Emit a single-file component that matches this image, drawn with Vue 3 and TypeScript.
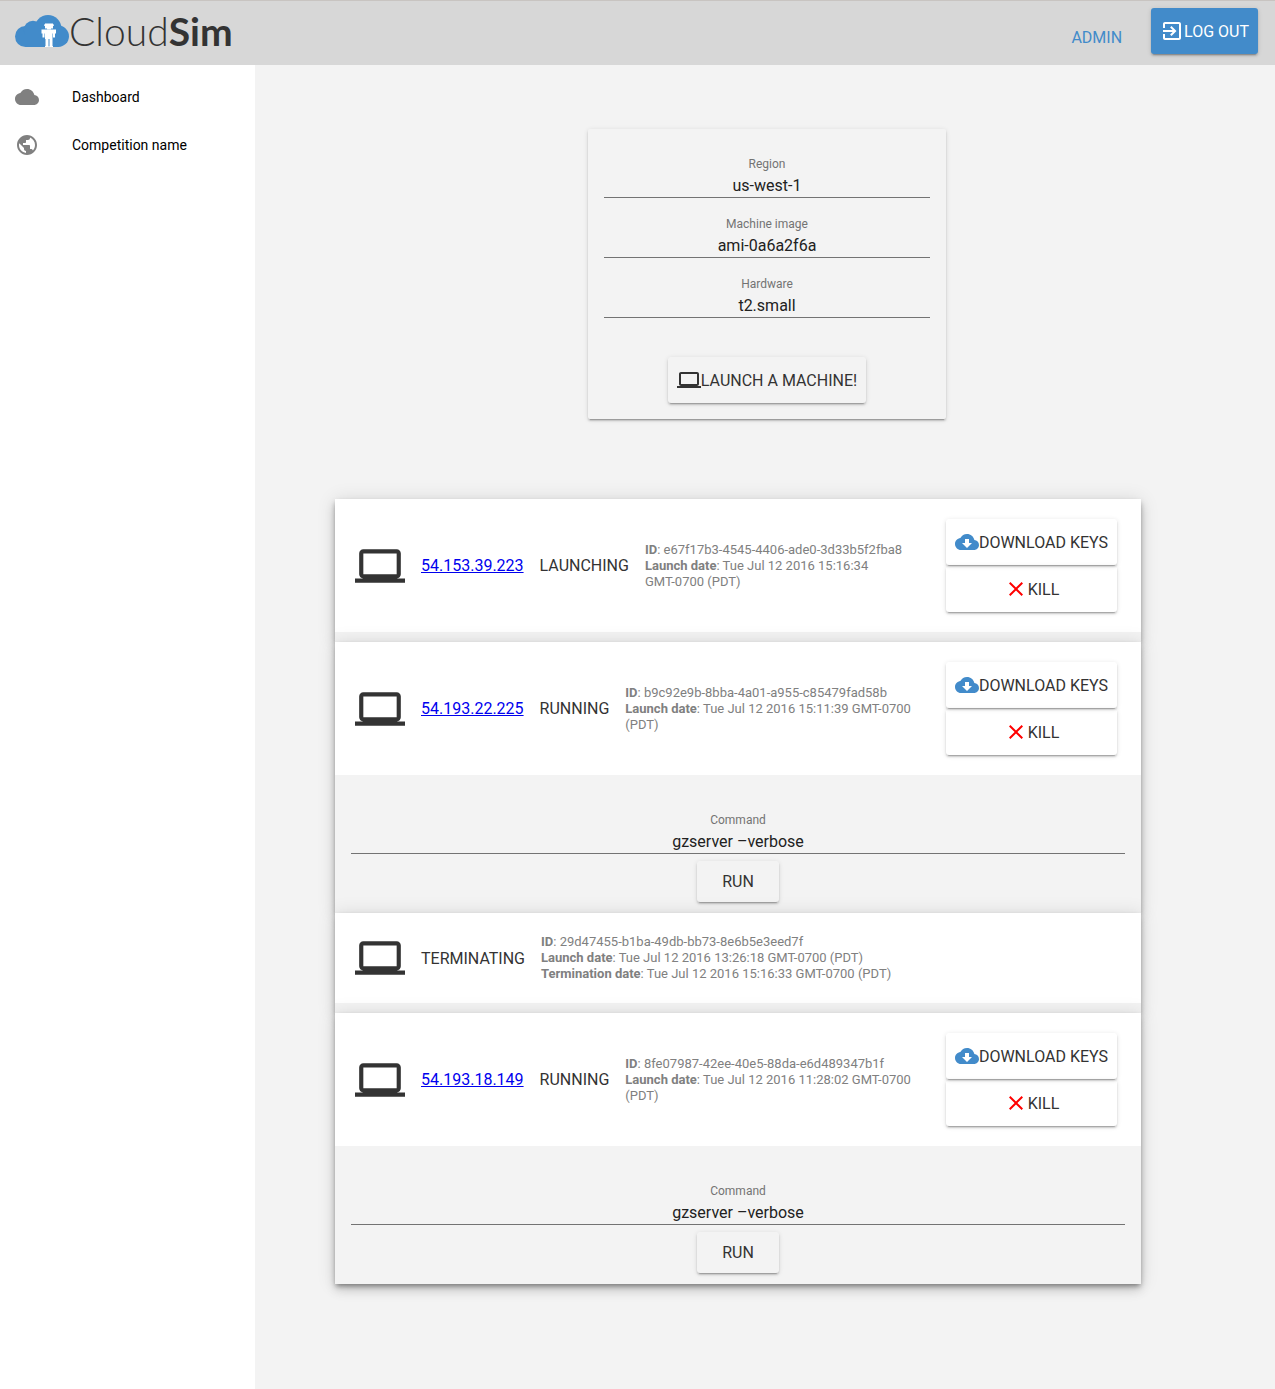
<script setup lang="ts">
import { reactive } from 'vue'

interface Machine {
  id: string
  ip?: string
  status: string
  launchDate: string
  terminationDate?: string
  command?: string
}

const icons = {
  cloud:
    'M19.35 10.04C18.67 6.59 15.64 4 12 4 9.11 4 6.6 5.64 5.35 8.04 2.34 8.36 0 10.91 0 14c0 3.31 2.69 6 6 6h13c2.76 0 5-2.24 5-5 0-2.64-2.05-4.78-4.65-4.96z',
  globe:
    'M12 2C6.48 2 2 6.48 2 12s4.48 10 10 10 10-4.48 10-10S17.52 2 12 2zm-1 17.93c-3.95-.49-7-3.85-7-7.93 0-.62.08-1.21.21-1.79L9 15v1c0 1.1.9 2 2 2v1.93zm6.9-2.54c-.26-.81-1-1.39-1.9-1.39h-1v-3c0-.55-.45-1-1-1H8v-2h2c.55 0 1-.45 1-1V7h2c1.1 0 2-.9 2-2v-.41c2.93 1.19 5 4.06 5 7.41 0 2.08-.8 3.97-2.1 5.39z',
  exit:
    'M10.09 15.59L11.5 17l5-5-5-5-1.41 1.41L12.67 11H3v2h9.67l-2.58 2.59zM19 3H5c-1.11 0-2 .9-2 2v4h2V5h14v14H5v-4H3v4c0 1.1.89 2 2 2h14c1.1 0 2-.9 2-2V5c0-1.1-.9-2-2-2z',
  laptop:
    'M20 18c1.1 0 1.99-.9 1.99-2L22 6c0-1.1-.9-2-2-2H4c-1.1 0-2 .9-2 2v10c0 1.1.9 2 2 2H0v2h24v-2h-4zM4 6h16v10H4V6z',
  download:
    'M19.35 10.04C18.67 6.59 15.64 4 12 4 9.11 4 6.6 5.64 5.35 8.04 2.34 8.36 0 10.91 0 14c0 3.31 2.69 6 6 6h13c2.76 0 5-2.24 5-5 0-2.64-2.05-4.78-4.65-4.96zM17 13l-5 5-5-5h3V9h4v4h3z',
  close:
    'M19 6.41L17.59 5 12 10.59 6.41 5 5 6.41 10.59 12 5 17.59 6.41 19 12 13.41 17.59 19 19 17.59 13.41 12z',
}

const fields = reactive([
  { key: 'region', label: 'Region', value: 'us-west-1' },
  { key: 'image', label: 'Machine image', value: 'ami-0a6a2f6a' },
  { key: 'hardware', label: 'Hardware', value: 't2.small' },
])

const zone = 'GMT-0700'

const machines = reactive<Machine[]>([
  {
    id: 'e67f17b3-4545-4406-ade0-3d33b5f2fba8',
    ip: '54.153.39.223',
    status: 'LAUNCHING',
    launchDate: 'Tue Jul 12 2016 15:16:34',
  },
  {
    id: 'b9c92e9b-8bba-4a01-a955-c85479fad58b',
    ip: '54.193.22.225',
    status: 'RUNNING',
    launchDate: 'Tue Jul 12 2016 15:11:39',
    command: 'gzserver –verbose',
  },
  {
    id: '29d47455-b1ba-49db-bb73-8e6b5e3eed7f',
    status: 'TERMINATING',
    launchDate: 'Tue Jul 12 2016 13:26:18',
    terminationDate: 'Tue Jul 12 2016 15:16:33',
  },
  {
    id: '8fe07987-42ee-40e5-88da-e6d489347b1f',
    ip: '54.193.18.149',
    status: 'RUNNING',
    launchDate: 'Tue Jul 12 2016 11:28:02',
    command: 'gzserver –verbose',
  },
])
</script>

<template>
  <div class="app">
    <header class="topbar">
      <div class="logo">
        <svg class="logo-mark" viewBox="0 0 54 32" aria-hidden="true">
          <g fill="#428bca">
            <circle cx="10.5" cy="21.5" r="10.5" />
            <circle cx="18" cy="15" r="9.3" />
            <circle cx="33" cy="13.5" r="13.5" />
            <circle cx="43.3" cy="21.3" r="10.7" />
            <rect x="10.5" y="14" width="33" height="18" />
          </g>
          <g fill="#fff">
            <path d="M30 8.500h8v1h1v1.200h-1v2.800h-2v1h-4v-1h-2v-2.800h-1v-1.200h1z" />
            <path d="M26.500 14.500h14.500v4h-1v4h-2v-4h-.5v5.500h-7.500v-5.500h-.5v4h-2v-4h-1z" />
            <path d="M30.500 24h3v7h.3v1h-3.800v-1h.5zM34.500 24h3v7h.5v1h-3.800v-1h.3z" />
          </g>
        </svg>
        <span class="logo-text">Cloud<b>Sim</b></span>
      </div>
      <nav class="account">
        <a href="#admin" class="admin">ADMIN</a>
        <button type="button" class="btn primary">
          <svg class="icon" viewBox="0 0 24 24" aria-hidden="true"><path :d="icons.exit" /></svg>LOG OUT
        </button>
      </nav>
    </header>

    <div class="body">
      <nav class="sidebar">
        <a href="#dashboard" class="side-link">
          <svg class="icon" viewBox="0 0 24 24" aria-hidden="true"><path :d="icons.cloud" /></svg>
          Dashboard
        </a>
        <a href="#competition" class="side-link">
          <svg class="icon" viewBox="0 0 24 24" aria-hidden="true"><path :d="icons.globe" /></svg>
          Competition name
        </a>
      </nav>

      <main class="content">
        <form class="launch" @submit.prevent>
          <div v-for="f in fields" :key="f.key" class="field">
            <label :for="f.key">{{ f.label }}</label>
            <input :id="f.key" v-model="f.value" type="text" />
          </div>
          <button type="submit" class="btn launch-btn">
            <svg class="icon" viewBox="0 0 24 24" aria-hidden="true"><path :d="icons.laptop" /></svg>LAUNCH A MACHINE!
          </button>
        </form>

        <section class="machines">
          <article v-for="m in machines" :key="m.id" class="machine">
            <div class="summary">
              <svg class="laptop" viewBox="0 0 24 24" aria-hidden="true"><path :d="icons.laptop" /></svg>
              <a v-if="m.ip" class="ip" :href="'#' + m.ip">{{ m.ip }}</a>
              <span class="status">{{ m.status }}</span>
              <div class="details">
                <div><b>ID</b>: {{ m.id }}</div>
                <div><b>Launch date</b>: {{ m.launchDate }} <span class="zone">{{ zone }}</span> (PDT)</div>
                <div v-if="m.terminationDate">
                  <b>Termination date</b>: {{ m.terminationDate }} <span class="zone">{{ zone }}</span> (PDT)
                </div>
              </div>
              <div v-if="m.ip" class="actions">
                <button type="button" class="btn">
                  <svg class="icon blue" viewBox="0 0 24 24" aria-hidden="true"><path :d="icons.download" /></svg>DOWNLOAD KEYS
                </button>
                <button type="button" class="btn">
                  <svg class="icon red" viewBox="0 0 24 24" aria-hidden="true"><path :d="icons.close" /></svg>KILL
                </button>
              </div>
            </div>
            <form v-if="m.command" class="command" @submit.prevent>
              <div class="field">
                <label :for="'cmd-' + m.id">Command</label>
                <input :id="'cmd-' + m.id" v-model="m.command" type="text" />
              </div>
              <button type="submit" class="btn">RUN</button>
            </form>
          </article>
        </section>
      </main>
    </div>
  </div>
</template>

<style>
body {
  margin: 0;
  background: #f3f3f3;
}
</style>

<style scoped>
.app {
  display: flex;
  flex-direction: column;
  min-height: 100vh;
  font-family: Roboto, "Liberation Sans", sans-serif;
  font-size: 16px;
  color: #333;
}
.app * {
  box-sizing: border-box;
}
.topbar {
  display: flex;
  justify-content: space-between;
  height: 65px;
  padding: 0 17px 0 15px;
  border-top: 1px solid #c8c4c1;
  background: #d7d7d7;
}
.logo {
  display: flex;
  align-items: center;
  height: 60px;
}
.logo-mark {
  width: 54px;
  height: 32px;
}
.logo-text {
  font-family: Lato, sans-serif;
  font-size: 39px;
  font-weight: 300;
  line-height: 60px;
}
.logo-text b {
  font-weight: 700;
}
.account {
  display: flex;
  align-items: flex-start;
  gap: 29px;
  padding-top: 7px;
}
.admin {
  padding-top: 20px;
  line-height: 19px;
  color: #428bca;
  text-decoration: none;
}
.btn {
  display: flex;
  align-items: center;
  justify-content: center;
  min-width: 82px;
  margin: 0;
  padding: 11px 9px;
  border: 0;
  border-radius: 3px;
  background: transparent;
  font: inherit;
  line-height: 19px;
  color: #333;
  white-space: nowrap;
  cursor: pointer;
  box-shadow:
    0 2px 2px 0 rgba(0, 0, 0, 0.14),
    0 1px 5px 0 rgba(0, 0, 0, 0.12),
    0 3px 1px -2px rgba(0, 0, 0, 0.2);
}
.primary {
  background: #428bca;
  color: #fff;
}
.icon {
  flex: none;
  width: 24px;
  height: 24px;
  fill: currentColor;
}
.blue {
  fill: #428bca;
}
.red {
  fill: #f00;
}
.body {
  display: flex;
  flex: 1;
}
.sidebar {
  flex: none;
  width: 20%;
  padding-top: 8px;
  background: #fff;
}
.side-link {
  display: flex;
  align-items: center;
  gap: 33px;
  height: 48px;
  padding-left: 15px;
  font-size: 14px;
  color: #000;
  text-decoration: none;
}
.side-link .icon {
  fill: #808080;
}
.content {
  flex: 1;
  padding: 64px 0 104px 4px;
  background: #f3f3f3;
}
.launch {
  width: 358px;
  margin: 0 auto 80px;
  padding: 16px;
  border-radius: 2px;
  box-shadow:
    0 2px 2px 0 rgba(0, 0, 0, 0.14),
    0 1px 5px 0 rgba(0, 0, 0, 0.12),
    0 3px 1px -2px rgba(0, 0, 0, 0.2);
}
.launch-btn {
  margin: 32px auto 0;
}
.field {
  padding: 10px 0 7px;
  text-align: center;
}
.field label {
  display: block;
  font-size: 12px;
  line-height: 18px;
  color: #737373;
}
.field input {
  display: block;
  width: 100%;
  height: 25px;
  padding: 0;
  border: 0;
  border-bottom: 1px solid #737373;
  outline: 0;
  background: transparent;
  font: inherit;
  color: #212121;
  text-align: center;
}
.machines {
  margin: 0 134px 0 76px;
}
.machine {
  position: relative;
  padding-bottom: 10px;
  background: #f3f3f3;
  box-shadow:
    0 6px 10px 0 rgba(0, 0, 0, 0.14),
    0 1px 18px 0 rgba(0, 0, 0, 0.12),
    0 3px 5px -1px rgba(0, 0, 0, 0.4);
}
.summary {
  display: flex;
  align-items: center;
  gap: 16px;
  padding: 20px 24px 20px 20px;
  background: #fff;
}
.laptop {
  flex: none;
  width: 50px;
  height: 50px;
  fill: #333;
}
.ip {
  color: #00e;
}
.details {
  flex: 1;
  font-size: 13px;
  line-height: 16px;
  color: #808080;
}
.zone {
  white-space: nowrap;
}
.actions {
  display: flex;
  flex-direction: column;
  gap: 1px;
  margin-left: 16px;
}
.command {
  padding: 26px 16px 1px;
}
.command .btn {
  margin: 0 auto;
}
</style>
